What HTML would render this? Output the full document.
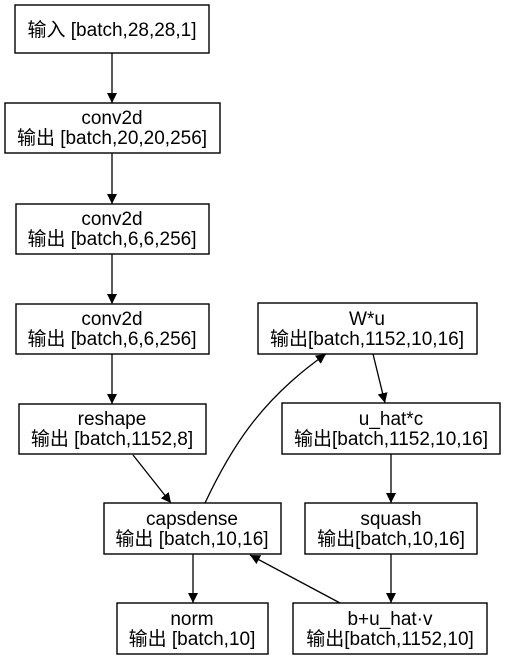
<!DOCTYPE html>
<html><head><meta charset="utf-8"><style>
html,body{margin:0;padding:0;background:#fff;width:507px;height:660px;overflow:hidden}
svg text{font-family:"Liberation Sans","Noto Sans CJK SC",sans-serif;font-size:19px;fill:#000;text-anchor:middle}
</style></head><body>
<svg width="507" height="660" viewBox="0 0 507 660" xmlns="http://www.w3.org/2000/svg">
<defs><marker id="a" markerWidth="10" markerHeight="10" refX="10" refY="5" orient="auto" markerUnits="userSpaceOnUse"><path d="M0,0 L10,5 L0,10 z" fill="#000"/></marker></defs>
<g fill="none" stroke="#000" stroke-width="1.4">
<rect x="15" y="5" width="194" height="48"/>
<rect x="5" y="103" width="215" height="50"/>
<rect x="16" y="204" width="193" height="50"/>
<rect x="16" y="304" width="193" height="50"/>
<rect x="19" y="404" width="187" height="50"/>
<rect x="104" y="503" width="177" height="51"/>
<rect x="117" y="603" width="151" height="51"/>
<rect x="258" y="303" width="219" height="51"/>
<rect x="282" y="403" width="218" height="51"/>
<rect x="305" y="503" width="172" height="51"/>
<rect x="293" y="603" width="194" height="51"/>
</g>
<g fill="none" stroke="#000" stroke-width="1.3" marker-end="url(#a)">
<line x1="112" y1="53" x2="112" y2="103"/>
<line x1="112" y1="153" x2="112" y2="204"/>
<line x1="112" y1="254" x2="112" y2="304"/>
<line x1="112" y1="354" x2="112" y2="404"/>
<line x1="133" y1="455" x2="171" y2="503"/>
<path d="M205,503 C230,450 260,400 326,354"/>
<line x1="373" y1="354" x2="385" y2="403"/>
<line x1="391" y1="454" x2="391" y2="503"/>
<line x1="391" y1="554" x2="391" y2="603"/>
<line x1="340" y1="603" x2="250" y2="555"/>
<line x1="193" y1="554" x2="193" y2="603"/>
</g>
<text x="112" y="36">输入 [batch,28,28,1]</text>
<text x="112" y="124">conv2d</text><text x="112" y="144">输出 [batch,20,20,256]</text>
<text x="112" y="225">conv2d</text><text x="112" y="245">输出 [batch,6,6,256]</text>
<text x="112" y="325">conv2d</text><text x="112" y="345">输出 [batch,6,6,256]</text>
<text x="112" y="425">reshape</text><text x="112" y="445">输出 [batch,1152,8]</text>
<text x="192" y="525">capsdense</text><text x="192" y="545">输出 [batch,10,16]</text>
<text x="192" y="625">norm</text><text x="192" y="645">输出 [batch,10]</text>
<text x="367" y="325">W*u</text><text x="367" y="345">输出[batch,1152,10,16]</text>
<text x="391" y="425">u_hat*c</text><text x="391" y="445">输出[batch,1152,10,16]</text>
<text x="391" y="525">squash</text><text x="391" y="545">输出[batch,10,16]</text>
<text x="390" y="625">b+u_hat·v</text><text x="390" y="645">输出[batch,1152,10]</text>
</svg>
</body></html>
